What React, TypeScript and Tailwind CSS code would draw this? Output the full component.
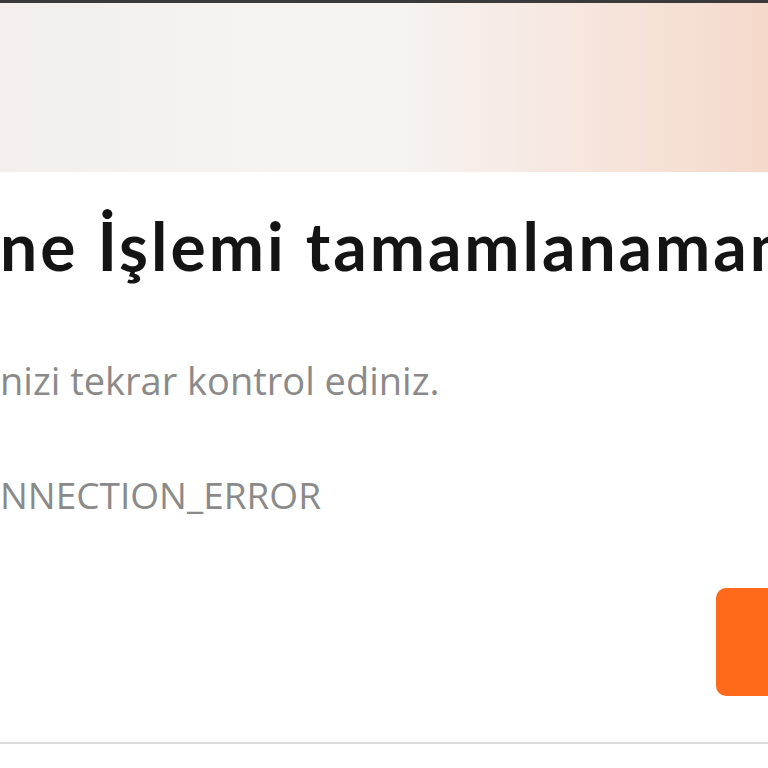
import React from "react";

const App = () => {
  return (
    <div className="flex h-[768px] w-[768px] flex-col overflow-hidden bg-[#fdfdfd]">
      <div className="h-[3px] shrink-0 bg-[#3a3a3a]" />
      <div className="h-[169px] shrink-0 bg-gradient-to-r from-[#f4efec] via-[#f6f4f2] to-[#f5d9cb]" />
      <div className="flex flex-1 flex-col bg-white">
        <h2 className="mt-[34px] whitespace-nowrap text-[66px] leading-[80px] font-bold tracking-[0.045em] text-[#141414] [font-family:Lato,'Noto_Sans',sans-serif]">
          ne İşlemi tamamlanamamıştır
        </h2>
        <p className="mt-[70px] whitespace-nowrap text-[38px] leading-[48px] text-[#8a8a8a] [font-family:'Open_Sans','Noto_Sans',sans-serif]">
          nizi tekrar kontrol ediniz.
        </p>
        <p className="mt-[67px] whitespace-nowrap text-[37px] leading-[48px] text-[#8a8a8a] [font-family:'Open_Sans','Noto_Sans',sans-serif]">
          NNECTION_ERROR
        </p>
        <div className="mt-[69px] flex pl-[716px]">
          <button
            type="button"
            className="h-[108px] w-[160px] shrink-0 rounded-[10px] bg-[#ff6a1a]"
          />
        </div>
        <div className="mt-[46px] h-[2px] bg-[#dcdcdc]" />
      </div>
    </div>
  );
};

export default App;
